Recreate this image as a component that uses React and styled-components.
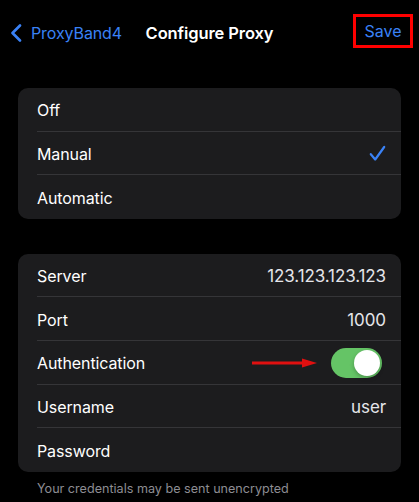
import React from "react";
import styled, { createGlobalStyle } from "styled-components";

const Global = createGlobalStyle`
  html, body { margin: 0; padding: 0; background: #000; }
  body { font-family: Inter, "Noto Sans", "Liberation Sans", sans-serif; -webkit-font-smoothing: antialiased; }
`;

const Page = styled.div`
  width: 419px;
  min-height: 502px;
  background: #000;
  color: #fff;
  display: flex;
  flex-direction: column;
`;

const NavBar = styled.header`
  height: 65px;
  display: grid;
  grid-template-columns: 1fr auto 1fr;
  align-items: center;
  padding: 0 6px 0 10px;
  box-sizing: border-box;
`;

const BackButton = styled.div`
  display: flex;
  align-items: center;
  gap: 9px;
  color: #3a82f6;
  font-size: 16px;
  letter-spacing: -0.1px;
  justify-self: start;
`;

const Title = styled.div`
  font-size: 16.5px;
  font-weight: 600;
  color: #fff;
  letter-spacing: -0.1px;
  margin-left: -4px;
`;

const SaveButton = styled.div`
  justify-self: end;
  width: 60px;
  height: 34px;
  box-sizing: border-box;
  border: 3px solid #ff0000;
  display: flex;
  align-items: center;
  justify-content: center;
  color: #3a82f6;
  font-size: 16px;
  margin-top: -3px;
`;

const Card = styled.section`
  margin: ${(p) => p.$top}px 18px 0;
  background: #1c1c1e;
  border-radius: 10px;
  overflow: hidden;
`;

const Row = styled.div`
  height: 43.6px;
  padding-left: 19px;
  display: flex;
`;

const RowInner = styled.div`
  flex: 1;
  display: flex;
  align-items: center;
  justify-content: space-between;
  padding: 2px 15px 0 0;
  border-bottom: ${(p) => (p.$last ? "none" : "1px solid #353538")};
  font-size: 16px;
  color: #fff;
  letter-spacing: -0.1px;
`;

const Value = styled.span`
  color: #e5e5ea;
  font-size: 17px;
`;

const ToggleWrap = styled.div`
  display: flex;
  align-items: center;
  gap: 14px;
  margin-right: 4px;
`;

const Toggle = styled.div`
  width: 51px;
  height: 30px;
  border-radius: 15px;
  background: #65c466;
  position: relative;
`;

const Knob = styled.div`
  position: absolute;
  top: 2px;
  right: 2px;
  width: 26px;
  height: 26px;
  border-radius: 50%;
  background: #fff;
  box-shadow: 0 2px 4px rgba(0, 0, 0, 0.25);
`;

const Footer = styled.div`
  margin: 9px 0 0 37px;
  font-size: 12.6px;
  color: #8d8d93;
`;

const Chevron = () => (
  <svg width="12" height="18" viewBox="0 0 12 18">
    <path d="M10 1.5 L2.5 9 L10 16.5" fill="none" stroke="#3a82f6" strokeWidth="2.6" strokeLinecap="round" strokeLinejoin="round" />
  </svg>
);

const Check = () => (
  <svg width="17" height="17" viewBox="0 0 17 17">
    <path d="M1.8 9.2 L6.2 14.5 L15.2 2" fill="none" stroke="#3a82f6" strokeWidth="2.2" strokeLinecap="round" strokeLinejoin="round" />
  </svg>
);

const Arrow = () => (
  <svg width="65" height="12" viewBox="0 0 65 12">
    <line x1="0" y1="6" x2="52" y2="6" stroke="#e01010" strokeWidth="3" />
    <polygon points="50,1.5 65,6 50,10.5" fill="#e01010" />
  </svg>
);

export default function App() {
  return (
    <Page>
      <Global />
      <NavBar>
        <BackButton>
          <Chevron />
          <span>ProxyBand4</span>
        </BackButton>
        <Title>Configure Proxy</Title>
        <SaveButton>Save</SaveButton>
      </NavBar>

      <Card $top={23}>
        <Row><RowInner>Off</RowInner></Row>
        <Row><RowInner>Manual<Check /></RowInner></Row>
        <Row><RowInner $last>Automatic</RowInner></Row>
      </Card>

      <Card $top={35}>
        <Row><RowInner>Server<Value>123.123.123.123</Value></RowInner></Row>
        <Row><RowInner>Port<Value>1000</Value></RowInner></Row>
        <Row>
          <RowInner>
            Authentication
            <ToggleWrap>
              <Arrow />
              <Toggle><Knob /></Toggle>
            </ToggleWrap>
          </RowInner>
        </Row>
        <Row><RowInner>Username<Value>user</Value></RowInner></Row>
        <Row><RowInner $last>Password</RowInner></Row>
      </Card>
      <Footer>Your credentials may be sent unencrypted</Footer>
    </Page>
  );
}
